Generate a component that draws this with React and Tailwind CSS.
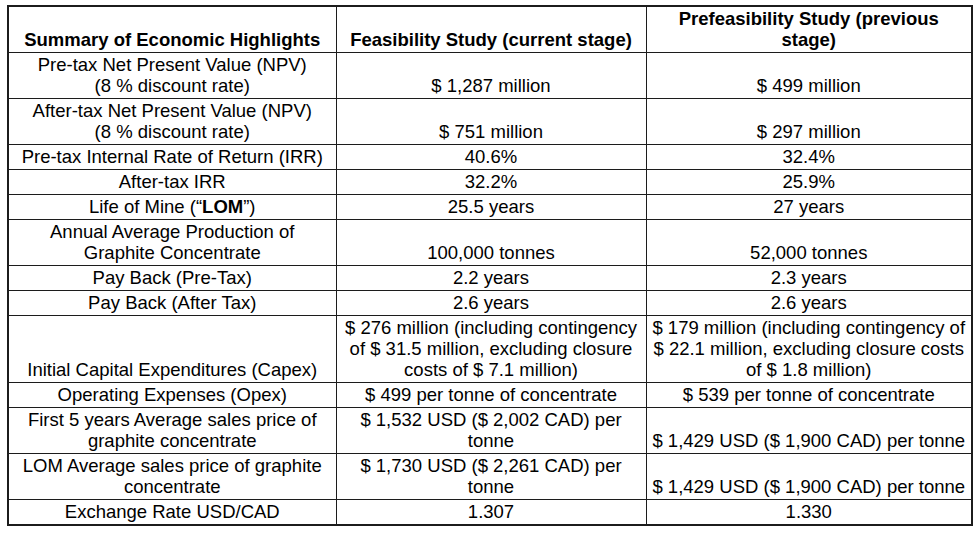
import React from "react";

const rows = [
  [["Pre-tax Net Present Value (NPV)", "(8 % discount rate)"], ["$ 1,287 million"], ["$ 499 million"]],
  [["After-tax Net Present Value (NPV)", "(8 % discount rate)"], ["$ 751 million"], ["$ 297 million"]],
  [["Pre-tax Internal Rate of Return (IRR)"], ["40.6%"], ["32.4%"]],
  [["After-tax IRR"], ["32.2%"], ["25.9%"]],
  [
    [
      <span key="l">
        Life of Mine (“<b>LOM</b>”)
      </span>,
    ],
    ["25.5 years"],
    ["27 years"],
  ],
  [["Annual Average Production of", "Graphite Concentrate"], ["100,000 tonnes"], ["52,000 tonnes"]],
  [["Pay Back (Pre-Tax)"], ["2.2 years"], ["2.3 years"]],
  [["Pay Back (After Tax)"], ["2.6 years"], ["2.6 years"]],
  [
    ["Initial Capital Expenditures (Capex)"],
    ["$ 276 million (including contingency", "of $ 31.5 million, excluding closure", "costs of $ 7.1 million)"],
    ["$ 179 million (including contingency of", "$ 22.1 million, excluding closure costs", "of $ 1.8 million)"],
  ],
  [["Operating Expenses (Opex)"], ["$ 499 per tonne of concentrate"], ["$ 539 per tonne of concentrate"]],
  [
    ["First 5 years Average sales price of", "graphite concentrate"],
    ["$ 1,532 USD ($ 2,002 CAD) per", "tonne"],
    ["$ 1,429 USD ($ 1,900 CAD) per tonne"],
  ],
  [
    ["LOM Average sales price of graphite", "concentrate"],
    ["$ 1,730 USD ($ 2,261 CAD) per", "tonne"],
    ["$ 1,429 USD ($ 1,900 CAD) per tonne"],
  ],
  [["Exchange Rate USD/CAD"], ["1.307"], ["1.330"]],
];

const Lines = ({ lines }) =>
  lines.map((l, i) => (
    <React.Fragment key={i}>
      {i > 0 && <br />}
      {l}
    </React.Fragment>
  ));

const cell = "border border-[#1c1c1c] px-0 pt-[1px] pb-[2px] align-bottom text-center whitespace-nowrap overflow-visible";

export default function App() {
  return (
    <div
      className="bg-white w-[980px] h-[533px] pl-[7px] pt-[5px] text-black text-[18.5px] leading-[21px]"
      style={{ fontFamily: '"Liberation Sans", Arial, sans-serif' }}
    >
      <table className="table-fixed border-collapse w-[964px] border-2 border-[#1c1c1c]">
        <colgroup>
          <col className="w-[328px]" />
          <col className="w-[310px]" />
          <col className="w-[326px]" />
        </colgroup>
        <thead>
          <tr>
            <th className={cell + " font-bold w-[328px]"}>Summary of Economic Highlights</th>
            <th className={cell + " font-bold w-[310px]"}>Feasibility Study (current stage)</th>
            <th className={cell + " font-bold w-[326px]"}>
              Prefeasibility Study (previous
              <br />
              stage)
            </th>
          </tr>
        </thead>
        <tbody>
          {rows.map((r, i) => (
            <tr key={i}>
              {r.map((c, j) => (
                <td key={j} className={cell}>
                  <Lines lines={c} />
                </td>
              ))}
            </tr>
          ))}
        </tbody>
      </table>
    </div>
  );
}
